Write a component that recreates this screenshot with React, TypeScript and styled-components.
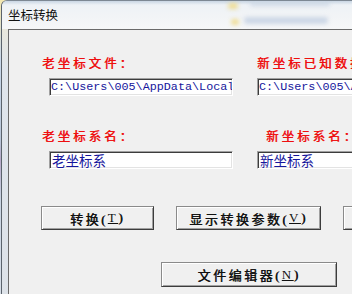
import React from 'react';
import styled, { createGlobalStyle } from 'styled-components';

const GlobalStyle = createGlobalStyle`
  html, body {
    margin: 0;
    padding: 0;
    width: 352px;
    height: 294px;
    overflow: hidden;
  }
  body {
    background: linear-gradient(180deg, #f3e7b0 0px, #c9d8ea 60px, #b9c6d8 140px, #b7a9c9 160px, #c9d4e2 200px, #d6dde6 294px);
  }
`;

const Desktop = styled.div`
  && {
    padding-left: 1px;
    height: 294px;
    box-sizing: border-box;
  }
`;

const Window = styled.div`
  && {
    display: flex;
    flex-direction: column;
    height: 100%;
    box-sizing: border-box;
    border-left: 1px solid #5b636c;
    border-top: 1px solid #7d8893;
    border-top-left-radius: 6px;
    background: #dfe4ea;
    overflow: hidden;
  }
`;

const TitleBar = styled.div`
  && {
    position: relative;
    height: 28px;
    flex: none;
    display: flex;
    align-items: center;
    padding: 0 0 1px 6px;
    box-sizing: border-box;
    background: linear-gradient(180deg, #c9d6e4 0px, #eef2f6 4px, #f2f4f6 16px, #f6f7f8 28px);
  }
`;

const TitleText = styled.span`
  && {
    font-family: 'Noto Sans CJK SC', 'Noto Sans', sans-serif;
    font-size: 12.5px;
    color: #111;
    line-height: 16px;
  }
`;

interface BlurProps {
  $x: number;
  $y: number;
  $w: number;
  $h: number;
  $c: string;
}

// blurred desktop things seen through the glass
const Blur = styled.span<BlurProps>`
  && {
    position: absolute;
    left: ${p => p.$x}px;
    top: ${p => p.$y}px;
    width: ${p => p.$w}px;
    height: ${p => p.$h}px;
    background: ${p => p.$c};
    border-radius: 3px;
    filter: blur(2px);
    opacity: 0.8;
  }
`;

const Body = styled.div`
  && {
    flex: 1;
    display: flex;
  }
`;

const SideFrame = styled.div`
  && {
    width: 6px;
    flex: none;
    background: linear-gradient(180deg, #e9e8dc 0px, #dfe5ec 40px, #dde2e8 294px);
  }
`;

const Client = styled.div`
  && {
    flex: 1;
    border-left: 1px solid #6a6a6a;
    border-top: 1px solid #6a6a6a;
    background: #f0f0f0;
    padding-left: 32px;
    display: flex;
    flex-direction: column;
    overflow: hidden;
  }
`;

const FieldGrid = styled.div<{ $top: number }>`
  && {
    display: grid;
    grid-template-columns: 216px 216px;
    grid-template-rows: 16px 18px;
    row-gap: 7px;
    margin-top: ${p => p.$top}px;
  }
`;

const Label = styled.div<{ $indent: number }>`
  && {
    margin-left: ${p => p.$indent}px;
    font-family: 'Noto Sans CJK SC', sans-serif;
    font-weight: 400;
    font-size: 12.5px;
    letter-spacing: 3px;
    line-height: 16px;
    color: #ee0f0f;
    text-shadow: 0.6px 0 0 #ee0f0f;
    white-space: nowrap;
  }
`;

const TextBox = styled.input<{ $indent: number; $mono?: boolean }>`
  && {
    margin: 0 0 0 ${p => p.$indent}px;
    width: 184px;
    height: 18px;
    box-sizing: border-box;
    padding: 0 0 0 ${p => (p.$mono ? 1 : 2)}px;
    border: 1px solid;
    border-color: #a0a0a0 #ffffff #ffffff #a0a0a0;
    box-shadow: inset 1px 1px #3c3c3c, inset -1px -1px #e3e3e3;
    background: #fff;
    color: #16169c;
    font-family: ${p =>
      p.$mono ? "'Liberation Mono', monospace" : "'Noto Sans CJK SC', sans-serif"};
    font-size: ${p => (p.$mono ? 11.75 : 13.5)}px;
    outline: none;
  }
`;

const ButtonRow = styled.div<{ $top: number; $left: number }>`
  && {
    display: flex;
    gap: 22px;
    margin-top: ${p => p.$top}px;
    margin-left: ${p => p.$left}px;
  }
`;

const Button = styled.button<{ $w: number; $h: number }>`
  && {
    flex: none;
    width: ${p => p.$w}px;
    height: ${p => p.$h}px;
    padding: 0;
    box-sizing: border-box;
    border: 1px solid;
    border-color: #8a8a8a #3c3c3c #3c3c3c #8a8a8a;
    box-shadow: inset 1px 1px #ffffff, inset -1px -1px #a0a0a0;
    background: #f0f0f0;
    color: #111;
    font-family: 'Liberation Serif', 'Noto Sans CJK SC', serif;
    font-size: 13px;
    font-weight: 400;
    text-shadow: 0.5px 0 0 #111;
    letter-spacing: 2.5px;
    white-space: nowrap;
    display: flex;
    align-items: center;
    justify-content: center;
  }
  u {
    text-shadow: none;
  }
`;

const App = () => (
  <>
    <GlobalStyle />
    <Desktop>
      <Window>
        <TitleBar>
          <Blur $x={226} $y={2} $w={10} $h={6} $c="#efd77a" />
          <Blur $x={229} $y={18} $w={8} $h={6} $c="#efd77a" />
          <Blur $x={248} $y={1} $w={80} $h={4} $c="#c7d3e2" />
          <Blur $x={242} $y={16} $w={84} $h={7} $c="#c3d0e2" />
          <TitleText>坐标转换</TitleText>
        </TitleBar>
        <Body>
          <SideFrame />
          <Client>
            <FieldGrid $top={25}>
              <Label $indent={1}>老坐标文件：</Label>
              <Label $indent={0}>新坐标已知数据文件：</Label>
              <TextBox $indent={8} $mono readOnly value={'C:\\Users\\005\\AppData\\Local'} />
              <TextBox $indent={0} $mono readOnly value={'C:\\Users\\005\\AppData\\Local'} />
            </FieldGrid>
            <FieldGrid $top={32}>
              <Label $indent={1}>老坐标系名：</Label>
              <Label $indent={9}>新坐标系名：</Label>
              <TextBox $indent={8} readOnly value="老坐标系" />
              <TextBox $indent={0} readOnly value="新坐标系" />
            </FieldGrid>
            <ButtonRow $top={37} $left={0}>
              <Button $w={113} $h={24}>
                转换(<u>T</u>)
              </Button>
              <Button $w={145} $h={24}>
                显示转换参数(<u>V</u>)
              </Button>
              <Button $w={113} $h={24}>
                退出(<u>E</u>)
              </Button>
            </ButtonRow>
            <ButtonRow $top={32} $left={120}>
              <Button $w={176} $h={25}>
                文件编辑器(<u>N</u>)
              </Button>
            </ButtonRow>
          </Client>
        </Body>
      </Window>
    </Desktop>
  </>
);

export default App;
